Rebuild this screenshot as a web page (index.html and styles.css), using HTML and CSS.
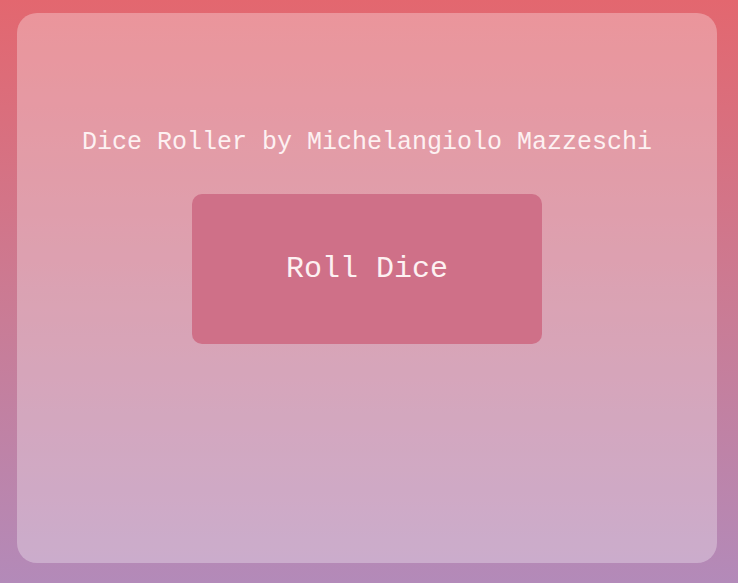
FILE: index.html
```html
<!DOCTYPE html>
<html>
<head>
<meta charset="utf-8">
<link rel="stylesheet" href="styles.css">
</head>
<body>
<main class="card">
  <h1 class="title">Dice Roller by Michelangiolo Mazzeschi</h1>
  <button class="roll">Roll Dice</button>
</main>
</body>
</html>
```
FILE: styles.css
```css
html, body {
  margin: 0;
  height: 100%;
}
body {
  background: linear-gradient(to bottom, #e3676f 0%, #c97c96 55%, #b38ab9 100%);
  font-family: "Liberation Mono", "Courier New", monospace;
  padding: 13px 21px 20px 17px;
  box-sizing: border-box;
}
.card {
  width: 700px;
  height: 550px;
  box-sizing: border-box;
  border-radius: 20px;
  background: rgba(255, 255, 255, 0.3);
  display: flex;
  flex-direction: column;
  align-items: center;
  padding-top: 115px;
}
.title {
  margin: 0;
  font-size: 25px;
  font-weight: normal;
  line-height: 30px;
  color: #fdf1f2;
}
.roll {
  margin-top: 36px;
  width: 350px;
  height: 150px;
  border: none;
  border-radius: 10px;
  background: #cf7088;
  color: #fdf1f2;
  font-family: "Liberation Mono", "Courier New", monospace;
  font-size: 30px;
}
```
